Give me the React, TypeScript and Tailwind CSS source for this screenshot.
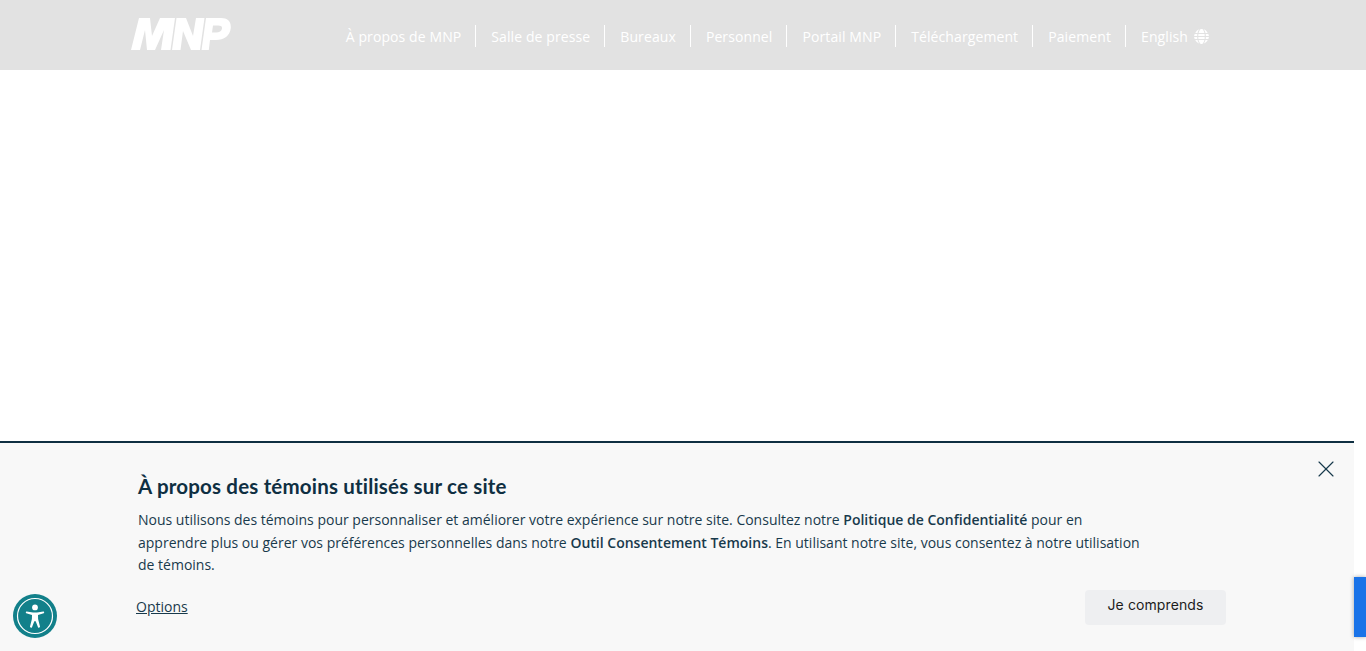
import React from 'react';
import { X } from 'lucide-react';

const navItems = ['À propos de MNP', 'Salle de presse', 'Bureaux', 'Personnel', 'Portail MNP', 'Téléchargement', 'Paiement'];

const MnpLogo = () => (
  <svg width="100" height="32" viewBox="0 0 100 32" className="mb-[2px] shrink-0" fill="#fff">
    <path d="M0 32 L8 0 H19 L21 18 L29 0 H44 L39.5 32 H30 L33 12 L24 32 H16 L14 12 L9 32 Z" />
    <path d="M41 32 L45.5 0 H55 L62 18 L65 0 H73.5 L69 32 H60 L52 13 L49.5 32 Z" />
    <path fillRule="evenodd" d="M70.5 32 L75 0 H90 C97 0 100.5 4 99.7 10.5 C99 17.5 93 22 85 22 H79 L77.8 32 Z M81 14.5 H85 C88.5 14.5 90.6 13 91 10.5 C91.3 8.3 89.8 7.5 87 7.5 H82 Z" />
  </svg>
);

const Globe = () => (
  <svg width="15" height="15" viewBox="0 0 14 14" fill="#fff" className="ml-[6px]">
    <path d="M5.2 .3 C4.2 1.1 3.6 2.3 3.3 3.7 H1.2 C2 2 3.4 .8 5.2 .3Z M8.8 .3 C10.6 .8 12 2 12.8 3.7 H10.7 C10.4 2.3 9.8 1.1 8.8 .3Z M6.2 .1 H7.8 C8.7 1 9.4 2.2 9.7 3.7 H4.3 C4.6 2.2 5.3 1 6.2 .1Z" />
    <path d="M.7 4.7 H3.1 C3 5.5 3 6.2 3 6.5 H.1 C.1 5.8 .4 5.2 .7 4.7Z M4.1 4.7 H9.9 C10 5.4 10 6.1 10 6.5 H4 C4 6.1 4 5.4 4.1 4.7Z M10.9 4.7 H13.3 C13.6 5.2 13.9 5.8 13.9 6.5 H11 C11 6.2 11 5.5 10.9 4.7Z" />
    <path d="M.1 7.5 H3 C3 7.9 3 8.6 3.1 9.3 H.7 C.4 8.8 .1 8.2 .1 7.5Z M4 7.5 H10 C10 7.9 10 8.6 9.9 9.3 H4.1 C4 8.6 4 7.9 4 7.5Z M11 7.5 H13.9 C13.9 8.2 13.6 8.8 13.3 9.3 H10.9 C11 8.5 11 7.8 11 7.5Z" />
    <path d="M1.2 10.3 H3.3 C3.6 11.7 4.2 12.9 5.2 13.7 C3.4 13.2 2 12 1.2 10.3Z M4.3 10.3 H9.7 C9.4 11.8 8.7 13 7.8 13.9 H6.2 C5.3 13 4.6 11.8 4.3 10.3Z M10.7 10.3 H12.8 C12 12 10.6 13.2 8.8 13.7 C9.8 12.9 10.4 11.7 10.7 10.3Z" />
  </svg>
);

const AccessibilityBadge = () => (
  <button className="absolute left-[13px] top-[594px] flex h-11 w-11 items-center justify-center rounded-full bg-[#12808a]">
    <svg width="38" height="38" viewBox="0 0 38 38">
      <circle cx="19" cy="19" r="17.5" fill="none" stroke="#fff" strokeWidth="1.2" />
      <circle cx="19" cy="10.4" r="2.9" fill="#fff" />
      <path
        d="M10.6 14.4 C9.8 14.2 9.5 16 10.3 16.3 L16 18 L15.9 22 L14 29.6 C13.8 30.8 15.6 31.2 16 30.2 L18.3 24.2 H19.7 L22 30.2 C22.4 31.2 24.2 30.8 24 29.6 L22.1 22 L22 18 L27.7 16.3 C28.5 16 28.2 14.2 27.4 14.4 L21 15.6 H17 Z"
        fill="#fff"
      />
    </svg>
  </button>
);

export default function App() {
  return (
    <div className="relative flex h-[651px] w-full flex-col overflow-hidden bg-white font-['Open_Sans',sans-serif]">
      {/* Header */}
      <header className="flex h-[70px] shrink-0 items-center bg-[#e2e2e2] pl-[131px] pr-[157px]">
        <MnpLogo />
        <nav className="ml-auto flex items-center pt-[2px] text-[14px] tracking-[0.1px] text-white">
          {navItems.map(item => (
            <span key={item} className="flex h-[22px] items-center border-r border-white pl-[15px] pr-[14px] whitespace-nowrap">
              {item}
            </span>
          ))}
          <span className="flex items-center pl-[15px] whitespace-nowrap">
            English
            <Globe />
          </span>
        </nav>
      </header>

      <div className="flex-1" />

      {/* Cookie banner */}
      <section className="relative flex h-[210px] w-[1354px] shrink-0 flex-col border-t-2 border-[#0f2f42] bg-[#f8f8f8] pl-[138px] pr-[128px] text-[#183a4c]">
        <button className="absolute right-[14px] top-[12px] text-[#183a4c]">
          <X size={28} strokeWidth={1} />
        </button>
        <h2 className="mt-[29px] font-['Lato',sans-serif] text-[20.5px] font-bold leading-[28px] tracking-[0.18px] text-[#0f2f42]">
          À propos des témoins utilisés sur ce site
        </h2>
        <p className="mt-[9.4px] w-[1010px] text-[14px] leading-[22.4px]">
          Nous utilisons des témoins pour personnaliser et améliorer votre expérience sur notre site. Consultez notre{' '}
          <strong className="font-semibold">Politique de Confidentialité</strong> pour en apprendre plus ou gérer vos préférences personnelles dans notre{' '}
          <strong className="font-semibold">Outil Consentement Témoins</strong>. En utilisant notre site, vous consentez à notre utilisation de témoins.
        </p>
        <div className="mt-[13.6px] flex items-center justify-between">
          <a className="-ml-[2px] mb-[2px] text-[14px] underline">Options</a>
          <button className="h-[35px] w-[141px] rounded bg-[#eeeff1] pb-[6px] font-['Inter',sans-serif] text-[14px] tracking-[0.1px] text-[#1c1c1c]">
            Je comprends
          </button>
        </div>
      </section>

      <AccessibilityBadge />
      {/* Blue tab on the right edge */}
      <div className="absolute right-0 top-[577px] h-[60px] w-3 bg-[#1a73e8] shadow-[0_0_4px_rgba(0,0,0,0.35)]" />
    </div>
  );
}
